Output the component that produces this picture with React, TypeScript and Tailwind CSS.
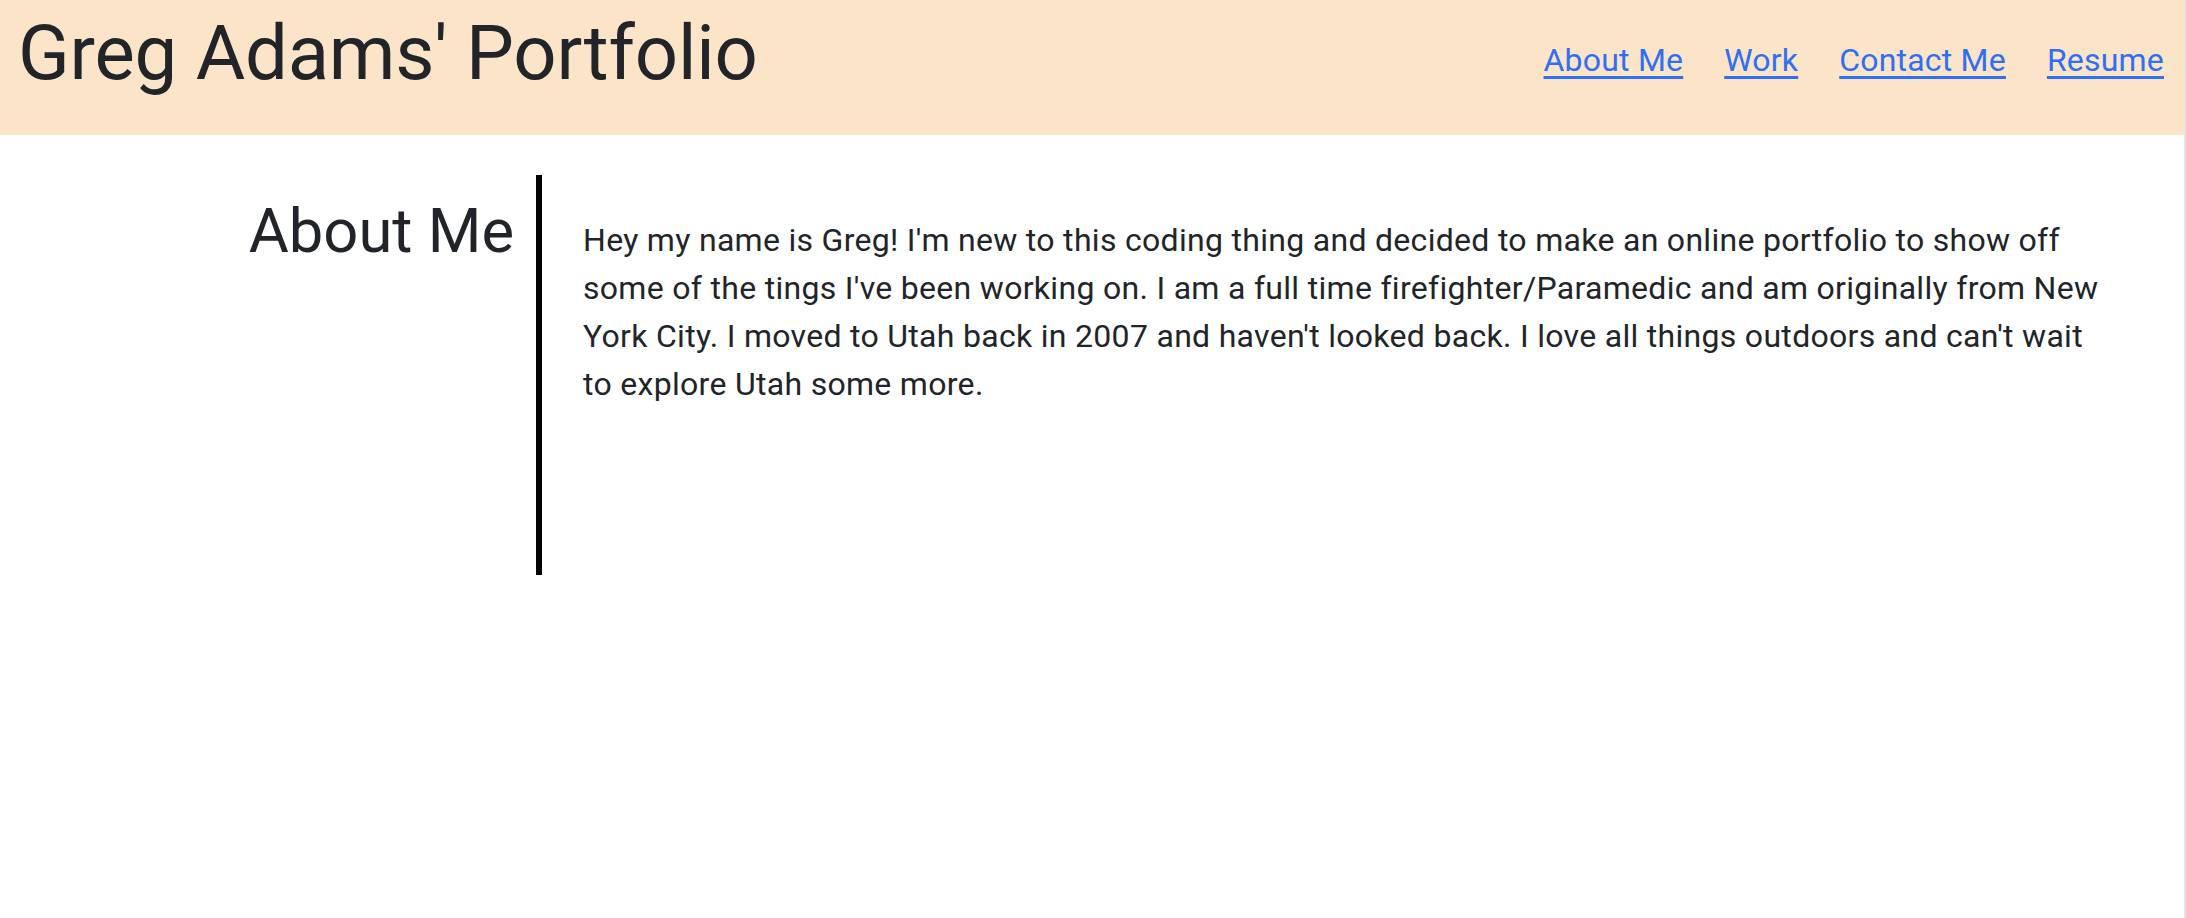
const navLinks = ["About Me", "Work", "Contact Me", "Resume"];

const Header = () => (
  <header className="flex items-start justify-between h-[135px] bg-[#fbe4c8] pl-[18px] pr-[20px]">
    <h1 className="mt-[8px] text-[76px] leading-[1.2] font-normal tracking-[-0.2px] text-[#212529]">
      Greg Adams' Portfolio
    </h1>
    <nav className="mt-[36px] flex gap-[41px] text-[32px] leading-[48px] tracking-[0.2px]">
      {navLinks.map((link) => (
        <a
          key={link}
          href="#"
          className="text-[#2f6ff3] underline underline-offset-[5px] decoration-[3px]"
        >
          {link}
        </a>
      ))}
    </nav>
  </header>
);

const AboutSection = () => (
  <section className="flex mt-[40px] h-[400px]">
    <div className="w-[514px] pt-[20px] text-right">
      <h2 className="text-[61.5px] leading-[1.2] font-normal text-[#212529]">
        About Me
      </h2>
    </div>
    <div className="ml-[22px] w-[6px] h-full bg-black" />
    <p className="ml-[41px] pt-[41px] w-[1530px] text-[32px] leading-[48px] tracking-[0.3px] text-[#212529]">
      Hey my name is Greg! I'm new to this coding thing and decided to make an
      online portfolio to show off some of the tings I've been working on. I
      am a full time firefighter/Paramedic and am originally from New York
      City. I moved to Utah back in 2007 and haven't looked back. I love all
      things outdoors and can't wait to explore Utah some more.
    </p>
  </section>
);

export default function App() {
  return (
    <div className="flex min-h-screen bg-white font-['Roboto',sans-serif]">
      <main className="flex-1">
        <Header />
        <AboutSection />
      </main>
      <div className="w-[2px] bg-[#e5e5e5]" />
    </div>
  );
}
